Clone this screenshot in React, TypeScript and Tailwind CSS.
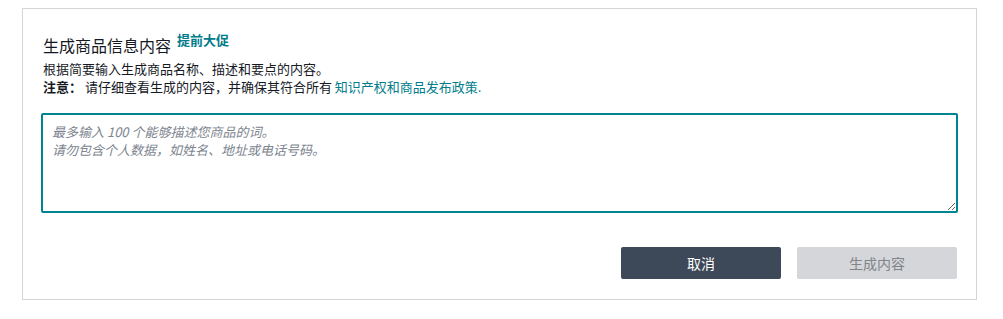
import React from 'react';

export default function App() {
  return (
    <div className="pt-2 pl-[22px] bg-white h-[319px] font-['Noto_Sans_CJK_SC','Noto_Sans',sans-serif]">
      <div className="w-[955px] h-[292px] border border-[#d5d5d5] px-[18px] pt-[25px]">
        <div className="flex items-start pl-[2px]">
          <h2 className="text-[16px] leading-[22px] text-[#16191f]">生成商品信息内容</h2>
          <span className="ml-[6px] text-[13px] leading-[12px] font-bold text-[#007c8a]">提前大促</span>
        </div>
        <div className="mt-[4px] pl-[2px] text-[13px] leading-[18px] text-[#16191f]">
          <p>根据简要输入生成商品名称、描述和要点的内容。</p>
          <p>
            <span className="font-bold">注意：</span> 请仔细查看生成的内容，并确保其符合所有{' '}
            <span className="text-[#007c8a]">知识产权和商品发布政策.</span>
          </p>
        </div>
        <textarea
          className="mt-[17px] block w-[917px] h-[100px] border-2 border-[#00848f] rounded-[2px] px-[9px] py-[8px] text-[13px] leading-[18px] text-[#16191f] outline-none placeholder:italic placeholder:text-[#7d8590]"
          placeholder={'最多输入 100 个能够描述您商品的词。\n请勿包含个人数据，如姓名、地址或电话号码。'}
        />
        <div className="mt-[34px] flex justify-end gap-4 pr-px">
          <button className="w-[160px] h-[32px] rounded-[2px] bg-[#3d4859] text-white text-[14px]">取消</button>
          <button className="w-[160px] h-[32px] rounded-[2px] bg-[#d5d6d9] text-[#80848b] text-[14px]">生成内容</button>
        </div>
      </div>
    </div>
  );
}
